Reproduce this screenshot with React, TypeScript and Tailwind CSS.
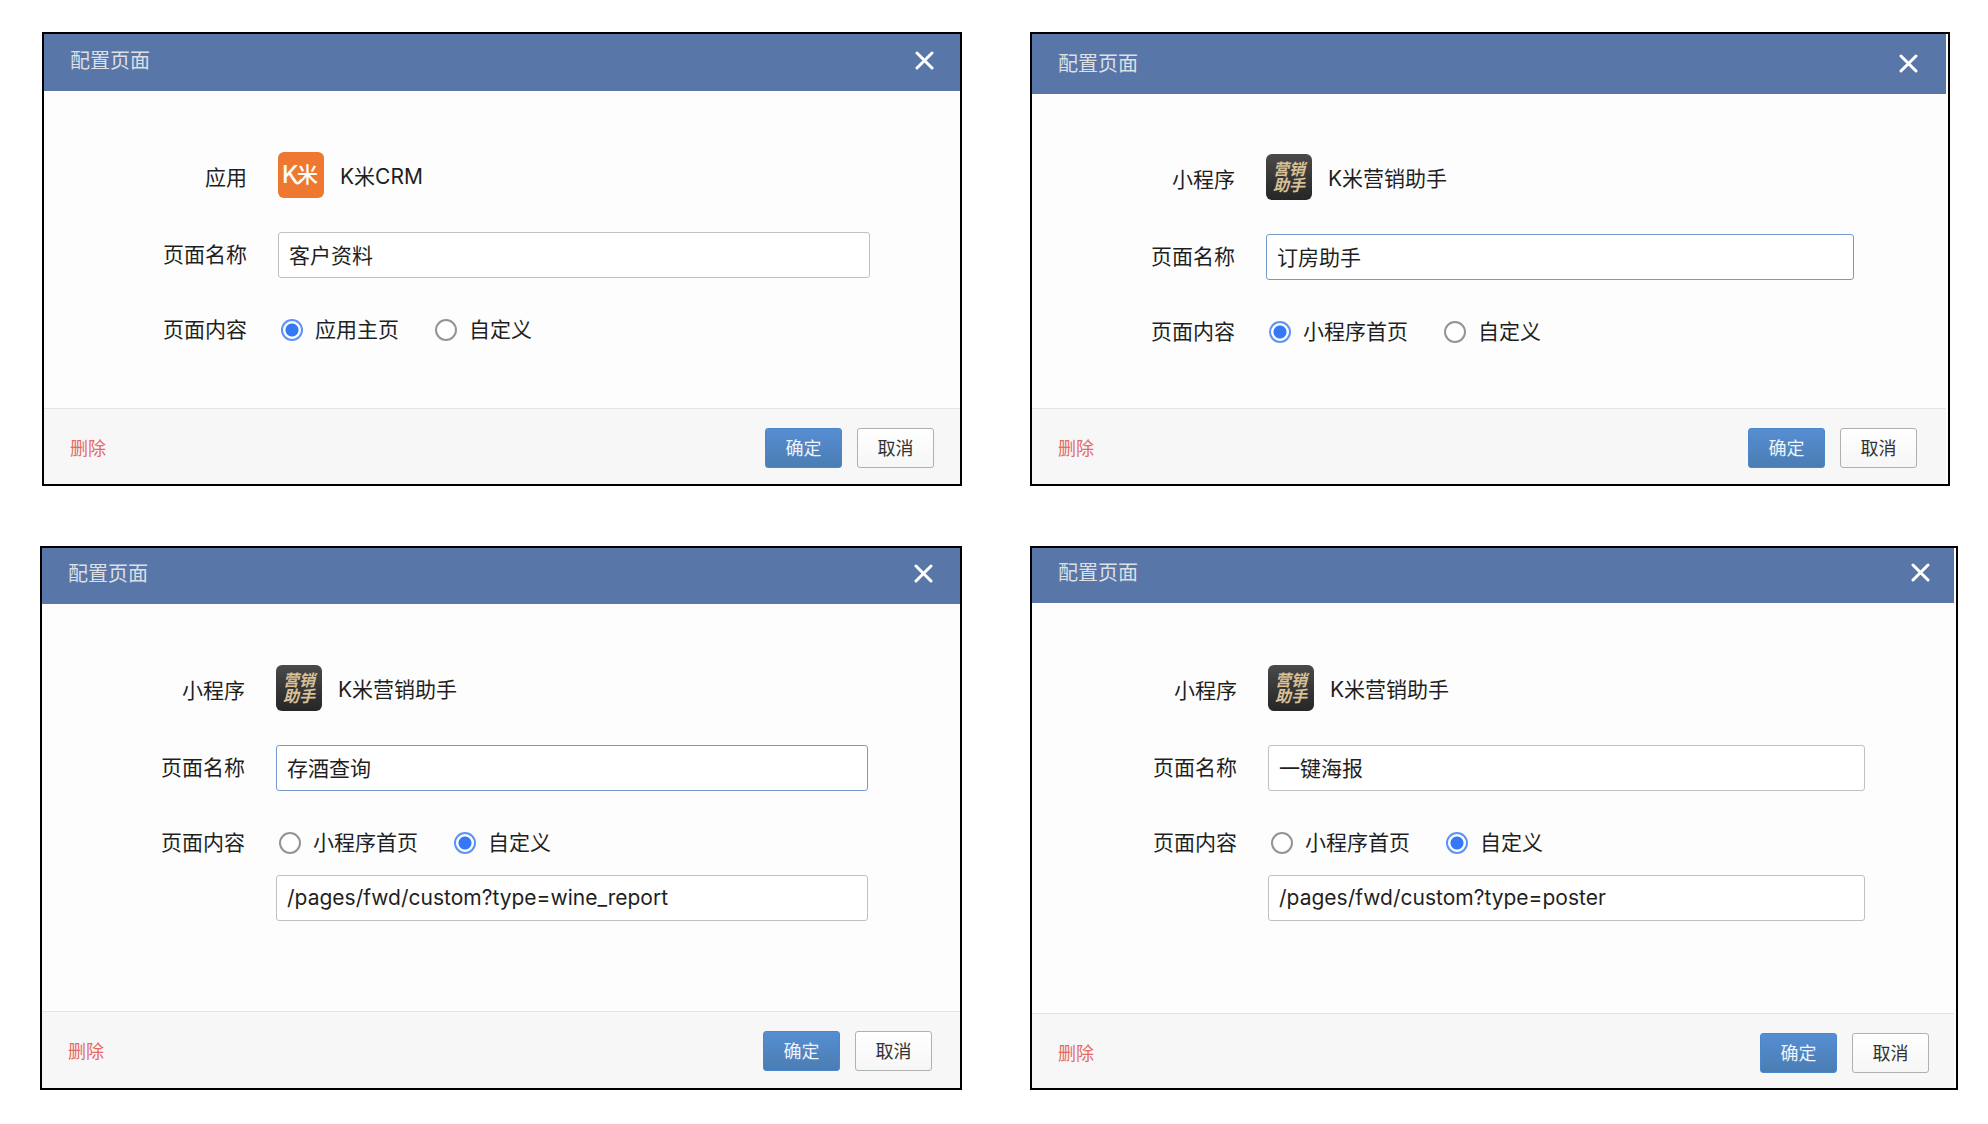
import { useId, useState } from "react";

type Logo = "crm" | "assistant";

interface DialogProps {
  kind: string;
  logo: Logo;
  appName: string;
  defaultName: string;
  homeLabel: string;
  path?: string;
  active?: boolean;
  frameClass?: string;
  headerClass: string;
  bodyClass: string;
  footerClass: string;
}

function CrmLogo() {
  return (
    <svg viewBox="0 0 46 46" className="size-[46px] shrink-0" role="img" aria-label="K米">
      <rect width="46" height="46" rx="6" fill="#ee782f" />
      <g fill="#fff" fontWeight="500">
        <text x="4" y="31" fontSize="24" fontFamily="Inter, sans-serif">K</text>
        <text x="19" y="30" fontSize="21" fontFamily='"Noto Sans CJK SC", sans-serif'>米</text>
      </g>
      <path d="M17 30 Q20 34 23 28" fill="none" stroke="#fff" strokeWidth="2" strokeLinecap="round" />
    </svg>
  );
}

function AssistantLogo() {
  return (
    <div className="flex size-[46px] shrink-0 items-center justify-center rounded-md bg-linear-to-b from-[#4b494a] to-[#262626]">
      <span className="w-8 text-[16px] leading-4 font-bold break-all text-[#d9c196] italic">营销助手</span>
    </div>
  );
}

function CloseIcon() {
  return (
    <svg viewBox="0 0 20 20" className="size-5" aria-hidden="true">
      <path d="M3 2 18 17 M18 2 3 17" stroke="#fff" strokeWidth="3" strokeLinecap="round" />
    </svg>
  );
}

function Radio({ name, label, checked, onChange }: { name: string; label: string; checked: boolean; onChange: () => void }) {
  return (
    <label className="flex items-center gap-3">
      <input
        type="radio"
        name={name}
        checked={checked}
        onChange={onChange}
        className="size-[22px] shrink-0 appearance-none rounded-full border-2 border-[#949494] bg-white checked:border-[#5c92f8] checked:bg-[radial-gradient(circle,#3478f6_6px,#fff_7px)]"
      />
      <span>{label}</span>
    </label>
  );
}

const fieldBase =
  "h-[46px] w-full min-w-0 rounded-[3px] border bg-white px-[10px] pb-0.5 text-[21px] text-[#1f1f1f] outline-none";

function ConfigDialog(p: DialogProps) {
  const id = useId();
  const [name, setName] = useState(p.defaultName);
  const [custom, setCustom] = useState(p.path !== undefined);
  const [path, setPath] = useState(p.path ?? "");

  return (
    <section role="dialog" aria-labelledby={id + "title"} className={"flex flex-col border-2 border-black bg-white " + (p.frameClass ?? "")}>
      <header className={"flex items-end justify-between bg-[#5877a8] pb-4 pl-[26px] " + p.headerClass}>
        <h2 id={id + "title"} className="text-[20px] leading-7 text-[#dcdfe4]">配置页面</h2>
        <button type="button" aria-label="关闭" className="flex h-7 items-center">
          <CloseIcon />
        </button>
      </header>

      <div className={"grid grid-cols-[203px_1fr] gap-x-[31px] bg-[#fdfdfd] text-[21px] text-[#1f1f1f] " + p.bodyClass}>
        <span className="pt-1.5 text-right leading-10">{p.kind}</span>
        <div className="flex items-center gap-4">
          {p.logo === "crm" ? <CrmLogo /> : <AssistantLogo />}
          <span className="pt-1">{p.appName}</span>
        </div>

        <label htmlFor={id + "name"} className="mt-[34px] text-right leading-[46px]">页面名称</label>
        <div className="mt-[34px] h-[46px]">
          <input
            id={id + "name"}
            type="text"
            value={name}
            onChange={(e) => setName(e.target.value)}
            className={fieldBase + (p.active ? " border-[#7499cc]" : " border-[#c0c0c0]")}
          />
        </div>

        <span id={id + "content"} className="mt-8 text-right leading-10">页面内容</span>
        <div className="mt-8">
          <div role="radiogroup" aria-labelledby={id + "content"} className="flex h-10 items-center gap-9 pl-[3px]">
            <Radio name={id + "mode"} label={p.homeLabel} checked={!custom} onChange={() => setCustom(false)} />
            <Radio name={id + "mode"} label="自定义" checked={custom} onChange={() => setCustom(true)} />
          </div>
          {custom && (
            <input
              type="text"
              aria-label="自定义路径"
              value={path}
              onChange={(e) => setPath(e.target.value)}
              className={fieldBase + " mt-3 border-[#c0c0c0]"}
            />
          )}
        </div>
      </div>

      <footer className={"flex items-center justify-between border-t border-[#e4e4e7] bg-[#f7f7f7] pt-[19px] pl-[26px] text-[18px] " + p.footerClass}>
        <button type="button" className="text-[#e36a67]">删除</button>
        <div className="flex gap-[15px]">
          <button type="button" className="h-10 w-[77px] rounded-[3px] border border-[#4a88cb] bg-linear-to-b from-[#568ed2] to-[#4a7db3] text-[#eef3fa]">
            确定
          </button>
          <button type="button" className="h-10 w-[77px] rounded-[3px] border border-[#b0b0b0] bg-linear-to-b from-white to-[#f6f6f6] text-[#333]">
            取消
          </button>
        </div>
      </footer>
    </section>
  );
}

export default function App() {
  return (
    <main className='grid min-h-screen grid-cols-[922fr_928fr] content-start items-start gap-x-[68px] gap-y-[60px] bg-white pt-8 pr-[30px] pb-8 pl-10 font-[Inter,"Noto_Sans_CJK_SC",sans-serif]'>
      <ConfigDialog
        kind="应用"
        logo="crm"
        appName="K米CRM"
        defaultName="客户资料"
        homeLabel="应用主页"
        frameClass="ml-0.5"
        headerClass="h-[57px] pr-[26px]"
        bodyClass="pt-[61px] pr-[90px] pb-[58px]"
        footerClass="pr-[26px] pb-4"
      />
      <ConfigDialog
        kind="小程序"
        logo="assistant"
        appName="K米营销助手"
        defaultName="订房助手"
        homeLabel="小程序首页"
        active
        frameClass="mr-2 pr-0.5"
        headerClass="h-[60px] pr-[28px]"
        bodyClass="pt-[60px] pr-[92px] pb-[56px]"
        footerClass="pr-[29px] pb-4"
      />
      <ConfigDialog
        kind="小程序"
        logo="assistant"
        appName="K米营销助手"
        defaultName="存酒查询"
        homeLabel="小程序首页"
        path="/pages/fwd/custom?type=wine_report"
        active
        headerClass="h-[56px] pr-[27px]"
        bodyClass="pt-[61px] pr-[92px] pb-[90px]"
        footerClass="pr-[28px] pb-[17px]"
      />
      <ConfigDialog
        kind="小程序"
        logo="assistant"
        appName="K米营销助手"
        defaultName="一键海报"
        homeLabel="小程序首页"
        path="/pages/fwd/custom?type=poster"
        frameClass="pr-0.5"
        headerClass="h-[55px] pr-[24px]"
        bodyClass="pt-[62px] pl-0.5 pr-[89px] pb-[92px]"
        footerClass="pr-[25px] pb-[15px]"
      />
    </main>
  );
}
